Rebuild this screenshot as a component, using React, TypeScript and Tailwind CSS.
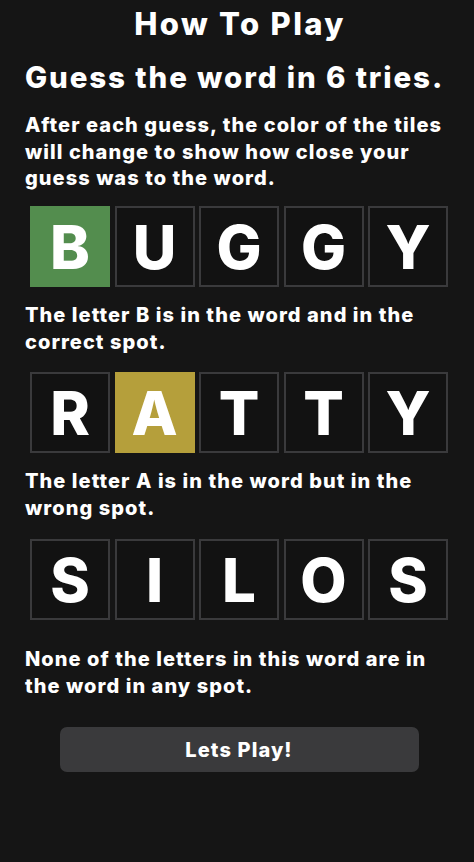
import React from "react";

type Tile = { l: string; c?: "g" | "y" };

function Row({ tiles }: { tiles: Tile[] }) {
  return (
    <div className="flex justify-center gap-[4.5px] pl-[4px]">
      {tiles.map((t, i) => (
        <div
          key={i}
          className={
            "w-[80px] h-[81px] flex items-center justify-center text-[60px] font-extrabold text-white leading-none " +
            (t.c === "g"
              ? "bg-[#538d4e]"
              : t.c === "y"
              ? "bg-[#b59f3b]"
              : "bg-[#121212] border-2 border-[#3a3a3c]")
          }
        >
          {t.l}
        </div>
      ))}
    </div>
  );
}

export default function App() {
  return (
    <div
      className="min-h-[862px] w-full bg-[#151515] text-white px-[25px] pt-[4px] tracking-[0.066em]"
      style={{ fontFamily: "Inter, 'Open Sans', sans-serif" }}
    >
      <h1 className="text-center text-[31px] font-extrabold leading-[40px] tracking-[0.075em] pl-[6px]">How To Play</h1>
      <h2 className="mt-[15px] text-[29.5px] font-extrabold leading-[36px] whitespace-nowrap tracking-[0.064em]">
        Guess the word in 6 tries.
      </h2>
      <p className="mt-[17px] text-[20px] font-extrabold leading-[26.5px]">
        After each guess, the color of the tiles will change to show how close your guess was to the word.
      </p>
      <div className="mt-[14.5px] tracking-normal">
        <Row tiles={[{ l: "B", c: "g" }, { l: "U" }, { l: "G" }, { l: "G" }, { l: "Y" }]} />
      </div>
      <p className="mt-[15px] text-[20px] font-extrabold leading-[27px]">
        The letter B is in the word and in the correct spot.
      </p>
      <div className="mt-[16px] tracking-normal">
        <Row tiles={[{ l: "R" }, { l: "A", c: "y" }, { l: "T" }, { l: "T" }, { l: "Y" }]} />
      </div>
      <p className="mt-[15px] text-[20px] font-extrabold leading-[27px]">
        The letter A is in the word but in the wrong spot.
      </p>
      <div className="mt-[17px] tracking-normal">
        <Row tiles={[{ l: "S" }, { l: "I" }, { l: "L" }, { l: "O" }, { l: "S" }]} />
      </div>
      <p className="mt-[26px] text-[20px] font-extrabold leading-[27px]">
        None of the letters in this word are in the word in any spot.
      </p>
      <div className="mt-[27px] flex justify-center">
        <button className="w-[359px] h-[45px] rounded-[7px] bg-[#3a3a3c] text-white text-[20px] font-extrabold ml-[4px] tracking-[0.055em]">
          Lets Play!
        </button>
      </div>
    </div>
  );
}
